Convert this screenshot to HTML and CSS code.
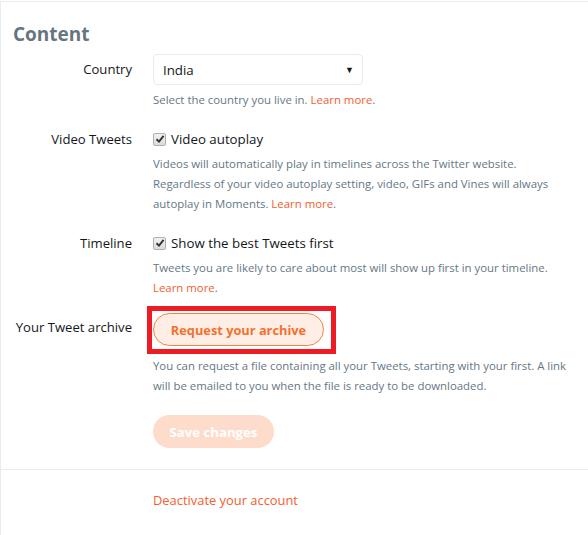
FILE: index.html
```html
<!DOCTYPE html>
<html>
<head>
<meta charset="utf-8">
<link rel="stylesheet" href="styles.css">
</head>
<body>
<div class="page">
  <h2 class="heading">Content</h2>

  <div class="row row-country">
    <div class="label">Country</div>
    <div class="control">
      <div class="select"><span>India</span><span class="caret">▼</span></div>
      <p class="help">Select the country you live in. <a class="link">Learn more</a>.</p>
    </div>
  </div>

  <div class="row row-video">
    <div class="label">Video Tweets</div>
    <div class="control">
      <label class="check"><span class="box"><svg viewBox="0 0 10 10" width="10" height="10"><path d="M1.5 5.2 L4 7.6 L8.6 1.8" fill="none" stroke="#333" stroke-width="1.9"/></svg></span>Video autoplay</label>
      <p class="help help-wide">Videos will automatically play in timelines across the Twitter website. Regardless of your video autoplay setting, video, GIFs and Vines will always autoplay in Moments. <a class="link">Learn more</a>.</p>
    </div>
  </div>

  <div class="row row-timeline">
    <div class="label">Timeline</div>
    <div class="control">
      <label class="check"><span class="box"><svg viewBox="0 0 10 10" width="10" height="10"><path d="M1.5 5.2 L4 7.6 L8.6 1.8" fill="none" stroke="#333" stroke-width="1.9"/></svg></span>Show the best Tweets first</label>
      <p class="help help-wide">Tweets you are likely to care about most will show up first in your timeline. <a class="link">Learn more</a>.</p>
    </div>
  </div>

  <div class="row row-archive">
    <div class="label label-archive">Your Tweet archive</div>
    <div class="control">
      <div class="highlight"><button class="btn-archive">Request your archive</button></div>
      <p class="help help-archive">You can request a file containing all your Tweets, starting with your first. A link will be emailed to you when the file is ready to be downloaded.</p>
    </div>
  </div>

  <div class="row row-save">
    <div class="label"></div>
    <div class="control"><button class="btn-save">Save changes</button></div>
  </div>

  <div class="footer">
    <div class="label"></div>
    <div class="control"><a class="link deactivate">Deactivate your account</a></div>
  </div>
</div>
</body>
</html>
```

FILE: styles.css
```css
* { box-sizing: border-box; }
html, body { margin: 0; padding: 0; background: #fff; }
body {
  font-family: "Open Sans", "Noto Sans", sans-serif;
  color: #14171a;
  width: 588px;
  height: 535px;
  overflow: hidden;
}
.page {
  border-top: 1px solid #e6ecf0;
  border-left: 1px solid #e6ecf0;
  margin-top: 1px;
  height: 534px;
}
.heading {
  margin: 0;
  padding: 19px 0 0 12px;
  font-size: 19px;
  font-weight: 700;
  color: #66757f;
  line-height: 26px;
  height: 52px;
}
.row {
  display: grid;
  grid-template-columns: 131px 1fr;
  column-gap: 21px;
}
.label {
  text-align: right;
  font-size: 13.1px;
  line-height: 20px;
}
.control { min-width: 0; }
.select {
  width: 210px;
  height: 31px;
  border: 1px solid #e6ecf0;
  border-radius: 4px;
  display: flex;
  align-items: center;
  justify-content: space-between;
  padding: 0 8px 0 9px;
  font-size: 13.3px;
}
.caret { font-size: 9px; color: #14171a; }
.row-country .label { padding-top: 5px; }
.help {
  margin: 5px 0 0;
  font-size: 11.4px;
  line-height: 20px;
  color: #657786;
}
.help-wide { max-width: 415px; }
.help-archive { max-width: 430px; }
.link { color: #f4602f; text-decoration: none; }
.row-video { margin-top: 19px; }
.row-timeline { margin-top: 19px; }
.row-archive { margin-top: 8px; }
.check {
  display: flex;
  align-items: center;
  font-size: 13.3px;
  line-height: 20px;
}
.box {
  width: 13px;
  height: 13px;
  border: 1px solid #b0b0b0;
  border-radius: 2px;
  background: linear-gradient(#f1f1f1, #dcdcdc);
  display: inline-flex;
  align-items: center;
  justify-content: center;
  margin-right: 5px;
}
.row-video .help, .row-timeline .help { margin-top: 5px; }
.label-archive { padding-top: 11px; }
.highlight {
  border: 5px solid #ed1c24;
  width: 189px;
  margin-left: -6px;
  padding: 2px 7px 0 1px;
  height: 48px;
}
.btn-archive {
  display: block;
  width: 171px;
  height: 33px;
  border: 1px solid #f5833f;
  border-radius: 17px;
  background: #ffeee5;
  color: #f4712d;
  font-family: inherit;
  font-weight: 700;
  font-size: 12.8px;
  padding: 0;
}
.row-archive .help { margin-top: 2px; }
.row-save { margin-top: 19px; }
.btn-save {
  width: 121px;
  height: 33px;
  border: none;
  border-radius: 17px;
  background: #fedccb;
  color: #fff;
  font-family: inherit;
  font-weight: 700;
  font-size: 13.2px;
  padding: 0;
}
.footer {
  display: grid;
  grid-template-columns: 131px 1fr;
  column-gap: 21px;
  border-top: 1px solid #e6ecf0;
  margin-top: 21px;
  padding-top: 18px;
}
.deactivate { font-size: 12.9px; line-height: 20px; }
```
